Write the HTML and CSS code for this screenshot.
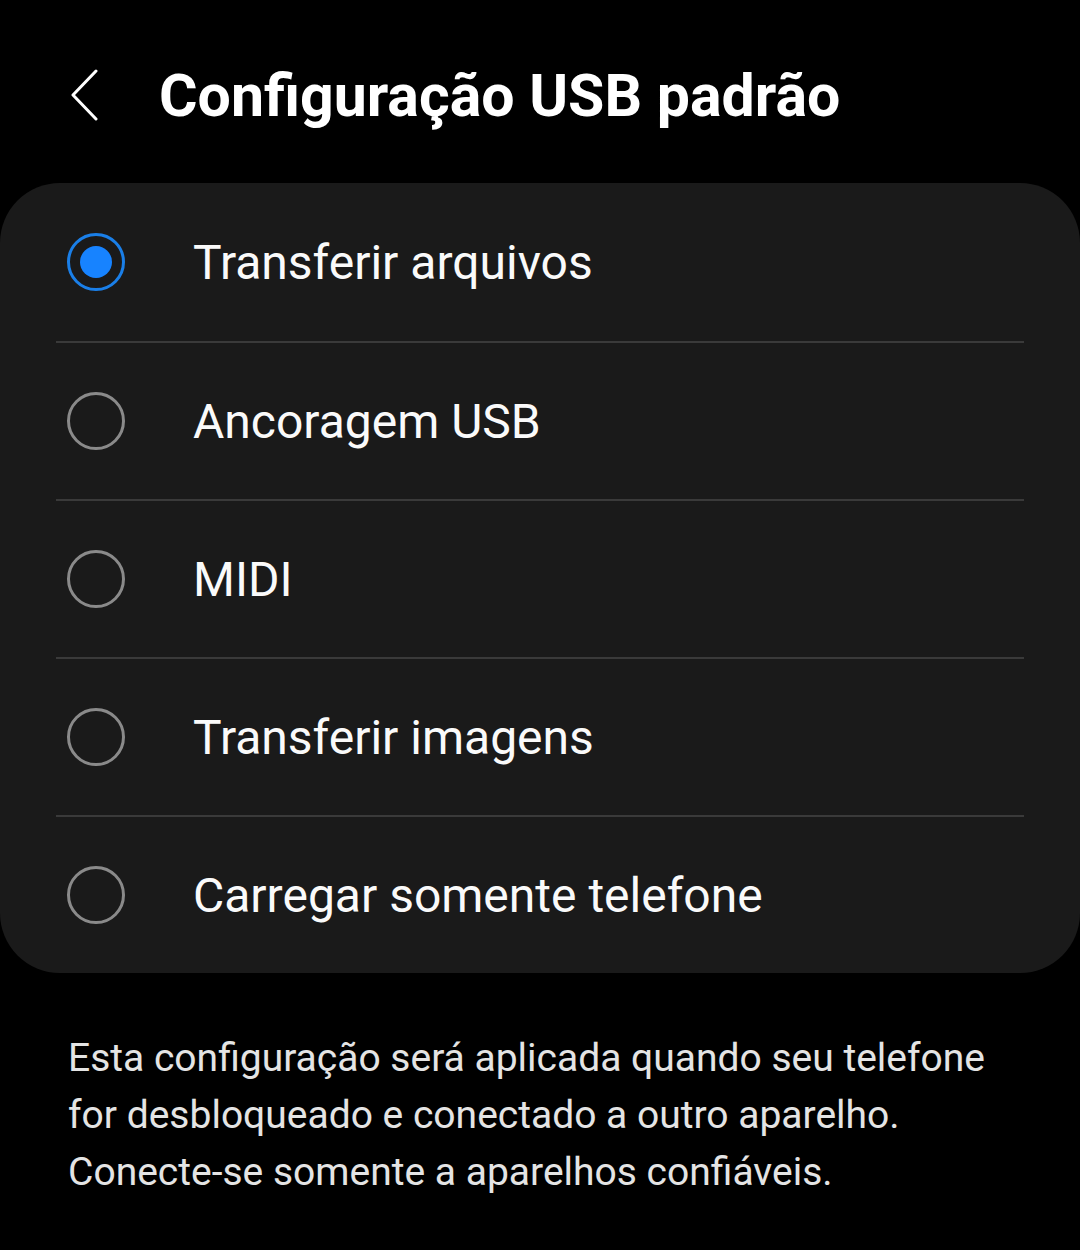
FILE: index.html
```html
<!DOCTYPE html>
<html lang="pt">
<head>
  <meta charset="UTF-8">
  <title>Configuração USB padrão</title>
  <meta name="viewport" content="width=device-width, initial-scale=1.0">
  <link rel="stylesheet" href="styles.css">
</head>
<body>

  <div class="header">
    <svg class="back" width="28" height="52" viewBox="0 0 28 52">
      <polyline points="25,2 2,26 25,50" fill="none" stroke="#fff" stroke-width="3" stroke-linecap="round" stroke-linejoin="round"/>
    </svg>
    <h1>Configuração USB padrão</h1>
  </div>

  <ul class="card">
    <li class="row"><span class="radio checked"></span><span class="label">Transferir arquivos</span></li>
    <li class="row"><span class="radio"></span><span class="label">Ancoragem USB</span></li>
    <li class="row"><span class="radio"></span><span class="label">MIDI</span></li>
    <li class="row"><span class="radio"></span><span class="label">Transferir imagens</span></li>
    <li class="row"><span class="radio"></span><span class="label">Carregar somente telefone</span></li>
  </ul>

  <p class="note">Esta configuração será aplicada quando seu telefone for desbloqueado e conectado a outro aparelho. Conecte-se somente a aparelhos confiáveis.</p>

</body>
</html>
```

FILE: styles.css
```css
body {
  margin: 0;
  background: #000;
  color: #fff;
  font-family: Roboto, "Noto Sans", sans-serif;
}
.header {
  height: 183px;
  display: flex;
  align-items: center;
  padding-left: 71px;
  box-sizing: border-box;
  padding-top: 7px;
}
.back {
  display: block;
}
.header h1 {
  margin: 0 0 0 60px;
  font-size: 59px;
  font-weight: 700;
  color: #fff;
}
.card {
  list-style: none;
  margin: 0;
  padding: 0 56px;
  background: #1a1a1a;
  border-radius: 60px;
}
.row {
  height: 158px;
  display: flex;
  align-items: center;
  padding-left: 11px;
  box-sizing: border-box;
}
.row + .row {
  border-top: 2px solid #3a3a3a;
}
.radio {
  width: 58px;
  height: 58px;
  box-sizing: border-box;
  border: 3px solid #8a8a8a;
  border-radius: 50%;
  flex: none;
  display: flex;
  align-items: center;
  justify-content: center;
}
.radio.checked {
  border-color: #1a7fe8;
}
.radio.checked::after {
  content: "";
  width: 32px;
  height: 32px;
  border-radius: 50%;
  background: #1783ff;
}
.label {
  margin-left: 68px;
  font-size: 48px;
  color: #fafafa;
}
.note {
  margin: 57px 0 0;
  padding: 0 68px;
  font-size: 39px;
  line-height: 57px;
  color: #e4e4e4;
}
```
